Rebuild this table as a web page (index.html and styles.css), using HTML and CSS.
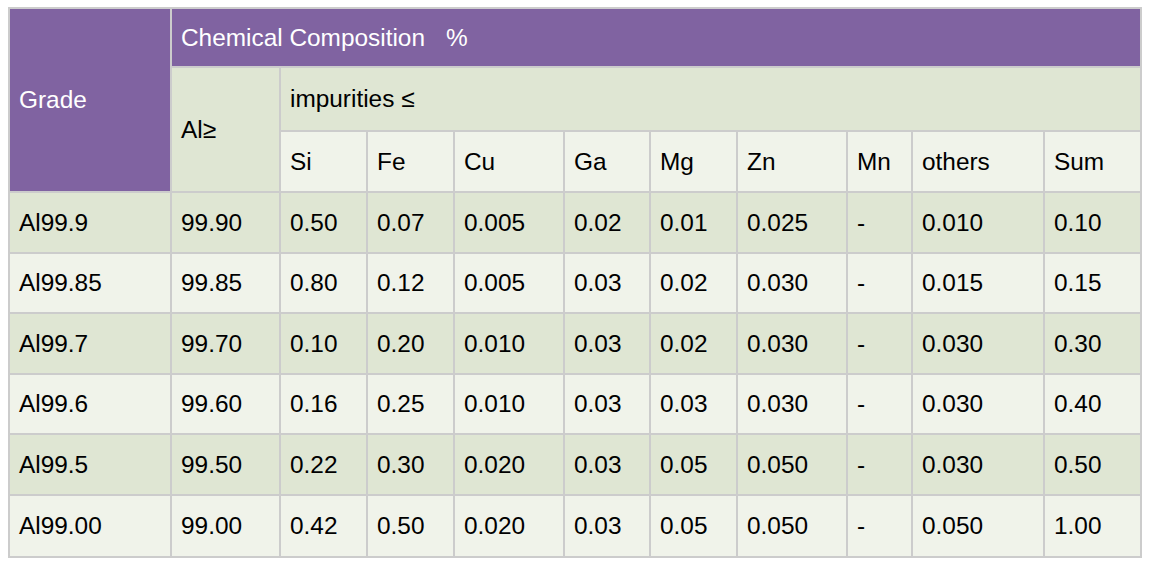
FILE: index.html
```html
<!DOCTYPE html>
<html>
<head>
<meta charset="utf-8">
<link rel="stylesheet" href="styles.css">
</head>
<body>
<table class="comp">
  <colgroup>
    <col class="w162"><col class="w109"><col class="w87"><col class="w87"><col class="w110"><col class="w86"><col class="w87"><col class="w110"><col class="w65"><col class="w132"><col class="w97">
  </colgroup>
  <tr class="r1">
    <th rowspan="3" class="purple">Grade</th>
    <th colspan="10" class="purple">Chemical Composition<span class="pct">%</span></th>
  </tr>
  <tr class="r2">
    <td rowspan="2" class="dark">Al≥</td>
    <td colspan="9" class="dark">impurities ≤</td>
  </tr>
  <tr class="r3 light">
    <td>Si</td><td>Fe</td><td>Cu</td><td>Ga</td><td>Mg</td><td>Zn</td><td>Mn</td><td>others</td><td>Sum</td>
  </tr>
  <tr class="h61 dark">
    <td>Al99.9</td><td>99.90</td><td>0.50</td><td>0.07</td><td>0.005</td><td>0.02</td><td>0.01</td><td>0.025</td><td>-</td><td>0.010</td><td>0.10</td>
  </tr>
  <tr class="h60 light">
    <td>Al99.85</td><td>99.85</td><td>0.80</td><td>0.12</td><td>0.005</td><td>0.03</td><td>0.02</td><td>0.030</td><td>-</td><td>0.015</td><td>0.15</td>
  </tr>
  <tr class="h61 dark">
    <td>Al99.7</td><td>99.70</td><td>0.10</td><td>0.20</td><td>0.010</td><td>0.03</td><td>0.02</td><td>0.030</td><td>-</td><td>0.030</td><td>0.30</td>
  </tr>
  <tr class="h60 light">
    <td>Al99.6</td><td>99.60</td><td>0.16</td><td>0.25</td><td>0.010</td><td>0.03</td><td>0.03</td><td>0.030</td><td>-</td><td>0.030</td><td>0.40</td>
  </tr>
  <tr class="h61 dark">
    <td>Al99.5</td><td>99.50</td><td>0.22</td><td>0.30</td><td>0.020</td><td>0.03</td><td>0.05</td><td>0.050</td><td>-</td><td>0.030</td><td>0.50</td>
  </tr>
  <tr class="h62 light">
    <td>Al99.00</td><td>99.00</td><td>0.42</td><td>0.50</td><td>0.020</td><td>0.03</td><td>0.05</td><td>0.050</td><td>-</td><td>0.050</td><td>1.00</td>
  </tr>
</table>
</body>
</html>
```

FILE: styles.css
```css
html, body {
  background: #ffffff;
}
body {
  margin: 7px 8px 0 8px;
  font-family: "Liberation Sans", Arial, sans-serif;
  font-size: 24.4px;
  color: #000000;
}
.comp {
  table-layout: fixed;
  width: 1134px;
  border-collapse: separate;
  border-spacing: 0;
  border: 1px solid #cccccc;
}
.comp th,
.comp td {
  box-sizing: border-box;
  border: 1px solid #cccccc;
  padding: 0 9px;
  text-align: left;
  vertical-align: middle;
  font-weight: normal;
  line-height: 28px;
  white-space: nowrap;
}
.pct {
  margin-left: 21px;
}
.w162 { width: 162px; }
.w109 { width: 109px; }
.w87 { width: 87px; }
.w110 { width: 110px; }
.w86 { width: 86px; }
.w65 { width: 65px; }
.w132 { width: 132px; }
.w97 { width: 97px; }

.purple {
  background: #8063a1;
  color: #ffffff;
}
.dark td, td.dark {
  background: #dfe6d3;
}
.light td {
  background: #f0f3ea;
}
.r1 th { height: 59px; }
.r2 td { height: 64px; }
.r3 td { height: 61px; }
.h60 td { height: 60px; }
.h61 td { height: 61px; }
.h62 td { height: 62px; }
```
